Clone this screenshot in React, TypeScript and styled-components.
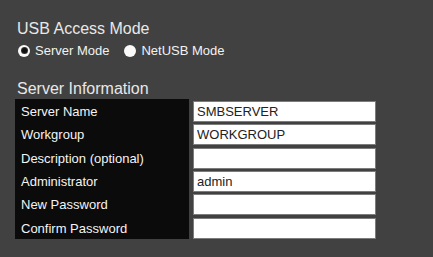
import React from "react";
import styled, { createGlobalStyle } from "styled-components";

const GlobalStyle = createGlobalStyle`
  html, body {
    margin: 0;
    padding: 0;
    background: #414141;
  }
  body {
    font-family: "Liberation Sans", Arial, sans-serif;
  }
`;

const Page = styled.div`
  width: 433px;
  height: 257px;
  background: #414141;
  padding: 20px 0 0 15px;
  box-sizing: border-box;
  color: #ececec;
`;

const Heading = styled.h2<{ $gap?: number }>`
  margin: ${(p) => p.$gap ?? 0}px 0 0 2px;
  font-size: 16px;
  line-height: 18px;
  font-weight: normal;
  color: #e8e8e8;
`;

const RadioRow = styled.div`
  display: flex;
  align-items: center;
  margin: 5px 0 0 3px;
  height: 15px;
`;

const RadioOption = styled.label`
  display: flex;
  align-items: center;
  gap: 5px;
  font-size: 13px;
  line-height: 15px;
  color: #f2f2f2;
  margin-right: 15px;
  cursor: pointer;
`;

const RadioDot = styled.span<{ $checked?: boolean }>`
  width: 12px;
  height: 12px;
  border-radius: 50%;
  background: #fafafa;
  display: flex;
  align-items: center;
  justify-content: center;
  &::after {
    content: "";
    width: 5px;
    height: 5px;
    border-radius: 50%;
    background: #111;
    display: ${(p) => (p.$checked ? "block" : "none")};
    box-shadow: 0 0 0 1px #333;
  }
`;

const Form = styled.div`
  display: grid;
  grid-template-columns: 174px 183px;
  grid-auto-rows: 23.33px;
  column-gap: 4px;
  margin-top: 1px;
`;

const Label = styled.div`
  background: #0b0b0b;
  color: #f4f4f4;
  font-size: 13px;
  line-height: 15px;
  padding: 5px 0 0 6px;
  box-sizing: border-box;
  white-space: nowrap;
`;

const Field = styled.input`
  box-sizing: border-box;
  width: 183px;
  height: 21px;
  margin-top: 2px;
  border: 1px solid #7c7c7c;
  background: #fff;
  padding: 0 3px;
  font-family: "Liberation Sans", Arial, sans-serif;
  font-size: 13px;
  color: #222;
  outline: none;
  border-radius: 0;
`;

const rows: { label: string; value: string; type?: string }[] = [
  { label: "Server Name", value: "SMBSERVER" },
  { label: "Workgroup", value: "WORKGROUP" },
  { label: "Description (optional)", value: "" },
  { label: "Administrator", value: "admin" },
  { label: "New Password", value: "", type: "password" },
  { label: "Confirm Password", value: "", type: "password" },
];

export default function App() {
  return (
    <>
      <GlobalStyle />
      <Page>
        <Heading>USB Access Mode</Heading>
        <RadioRow>
          <RadioOption>
            <RadioDot $checked />
            Server Mode
          </RadioOption>
          <RadioOption>
            <RadioDot />
            NetUSB Mode
          </RadioOption>
        </RadioRow>
        <Heading $gap={22}>Server Information</Heading>
        <Form>
          {rows.map((r) => (
            <React.Fragment key={r.label}>
              <Label>{r.label}</Label>
              <Field type={r.type ?? "text"} defaultValue={r.value} />
            </React.Fragment>
          ))}
        </Form>
      </Page>
    </>
  );
}
